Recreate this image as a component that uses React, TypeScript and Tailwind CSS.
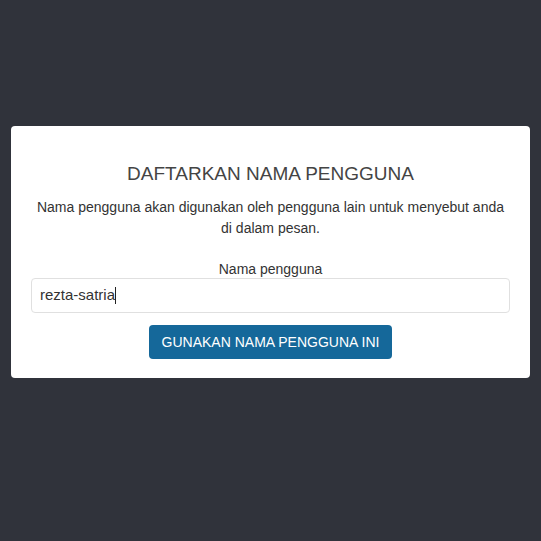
export default function App() {
  return (
    <div className="min-h-[541px] bg-[#30333b] pt-[126px] px-[11px] font-['Liberation_Sans',Arial,sans-serif]">
      <div className="bg-white rounded-[4px] px-5 pt-[37px] pb-[19px] text-center">
        <h1 className="text-[19px] leading-[21px] text-[#444] mb-[13px]">DAFTARKAN NAMA PENGGUNA</h1>
        <p className="text-[14px] leading-[21px] text-[#333] px-1">
          Nama pengguna akan digunakan oleh pengguna lain untuk menyebut anda di dalam pesan.
        </p>

        <div className="mt-[22px]">
          <label className="block text-[14px] leading-[16px] text-[#333] mb-[1px]">Nama pengguna</label>
          <div className="h-[35px] border border-[#e0e0e0] rounded-[4px] flex items-center px-2 text-left text-[15px] text-[#333]">
            <span>rezta-satria</span>
            <span className="inline-block w-px h-[17px] bg-[#222]" />
          </div>
        </div>

        <button className="mt-[12px] h-[34px] px-[13px] rounded-[4px] bg-[#15689a] text-white text-[14px] uppercase">
          Gunakan nama pengguna ini
        </button>
      </div>
    </div>
  );
}
